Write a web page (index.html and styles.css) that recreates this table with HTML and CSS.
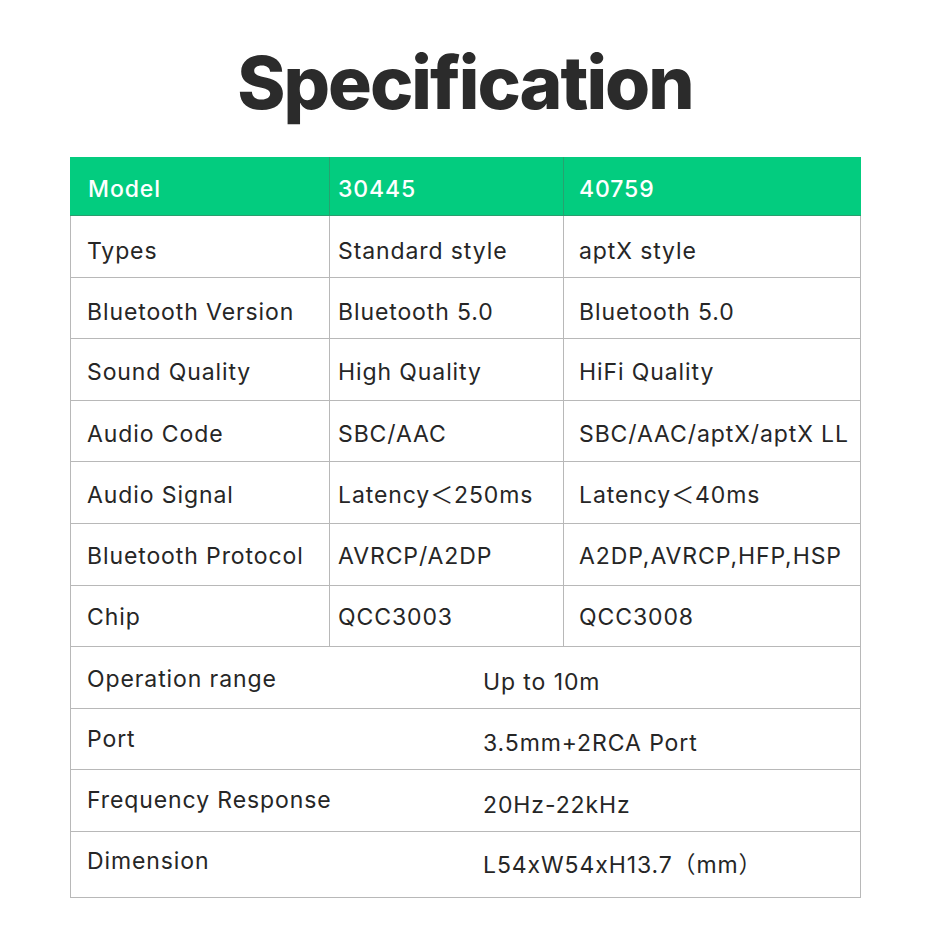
FILE: index.html
```html
<!DOCTYPE html>
<html>
<head>
<meta charset="utf-8">
<link rel="stylesheet" href="styles.css">
</head>
<body>
<h1 class="title">Specification</h1>
<div class="spec">
  <div class="row head">
    <div class="c c1">Model</div><div class="c c2">30445</div><div class="c c3">40759</div>
  </div>
  <div class="row r1">
    <div class="c c1">Types</div><div class="c c2">Standard style</div><div class="c c3">aptX style</div>
  </div>
  <div class="row r2">
    <div class="c c1">Bluetooth Version</div><div class="c c2">Bluetooth 5.0</div><div class="c c3">Bluetooth 5.0</div>
  </div>
  <div class="row r3">
    <div class="c c1">Sound Quality</div><div class="c c2">High Quality</div><div class="c c3">HiFi Quality</div>
  </div>
  <div class="row r4">
    <div class="c c1">Audio Code</div><div class="c c2">SBC/AAC</div><div class="c c3">SBC/AAC/aptX/aptX LL</div>
  </div>
  <div class="row r5">
    <div class="c c1">Audio Signal</div><div class="c c2">Latency＜250ms</div><div class="c c3">Latency＜40ms</div>
  </div>
  <div class="row r6">
    <div class="c c1">Bluetooth Protocol</div><div class="c c2">AVRCP/A2DP</div><div class="c c3">A2DP,AVRCP,HFP,HSP</div>
  </div>
  <div class="row r7">
    <div class="c c1">Chip</div><div class="c c2">QCC3003</div><div class="c c3">QCC3008</div>
  </div>
  <div class="row wide w1">
    <div class="lbl">Operation range</div><div class="val">Up to 10m</div>
  </div>
  <div class="row wide w2">
    <div class="lbl">Port</div><div class="val">3.5mm+2RCA Port</div>
  </div>
  <div class="row wide w3">
    <div class="lbl">Frequency Response</div><div class="val">20Hz-22kHz</div>
  </div>
  <div class="row wide w4">
    <div class="lbl">Dimension</div><div class="val">L54xW54xH13.7（mm）</div>
  </div>
</div>
</body>
</html>
```
FILE: styles.css
```css
html, body {
  margin: 0;
  padding: 0;
  background: #ffffff;
}
body {
  width: 930px;
  height: 930px;
  font-family: "Inter", "Noto Sans CJK SC", sans-serif;
  color: #262626;
  overflow: hidden;
}
.title {
  margin: 0;
  padding-top: 38px;
  height: 157px;
  box-sizing: border-box;
  text-align: center;
  font-size: 73px;
  font-weight: 800;
  letter-spacing: -2px;
  line-height: 90px;
  color: #2b2b2b;
}
.spec {
  margin-left: 70px;
  width: 791px;
  box-sizing: border-box;
  border-left: 1px solid #b8b8b8;
  border-right: 1px solid #b8b8b8;
}
.row {
  display: grid;
  grid-template-columns: 259px 234px 1fr;
  height: 61.6px;
  box-sizing: border-box;
  border-bottom: 1px solid #b8b8b8;
  font-size: 23px;
  line-height: 30px;
  letter-spacing: 0.9px;
}
.row.head {
  height: 59px;
  background: #03cc7f;
  color: #ffffff;
  font-weight: 500;
  border-bottom: 1px solid #2a9d6e;
  margin-left: -1px;
  margin-right: -1px;
  grid-template-columns: 260px 234px 1fr;
}
.row.head .c {
  border-right-color: #27a26f;
  padding-top: 6px;
}
.row.head .c1 { padding-left: 18px; }
.c {
  display: flex;
  align-items: center;
  padding-top: 10px;
  white-space: nowrap;
}
.r2 .c { padding-top: 8px; }
.r3 .c { padding-top: 6px; }
.r4 .c { padding-top: 5px; }
.r5 .c { padding-top: 4px; }
.r6 .c { padding-top: 3px; }
.r7 .c { padding-top: 2px; }
.c1 {
  padding-left: 16px;
  border-right: 1px solid #b8b8b8;
}
.c2 {
  padding-left: 8px;
  border-right: 1px solid #b8b8b8;
}
.c3 {
  padding-left: 15px;
}
.row.head .c3 { border-right: none; }
.row.wide {
  display: flex;
  align-items: center;
}
.lbl {
  width: 412px;
  padding-left: 16px;
  box-sizing: border-box;
  padding-top: 4px;
}
.val {
  padding-top: 10px;
}
.w2 .lbl { padding-top: 0; }
.w2 .val { padding-top: 8px; }
.w3 .lbl { padding-top: 0; padding-bottom: 2px; }
.w3 .val { padding-top: 8px; }
.w4 {
  height: 66px;
}
.w4 .lbl {
  padding-top: 0;
  padding-bottom: 6px;
}
.w4 .val {
  padding-top: 2px;
}
```
